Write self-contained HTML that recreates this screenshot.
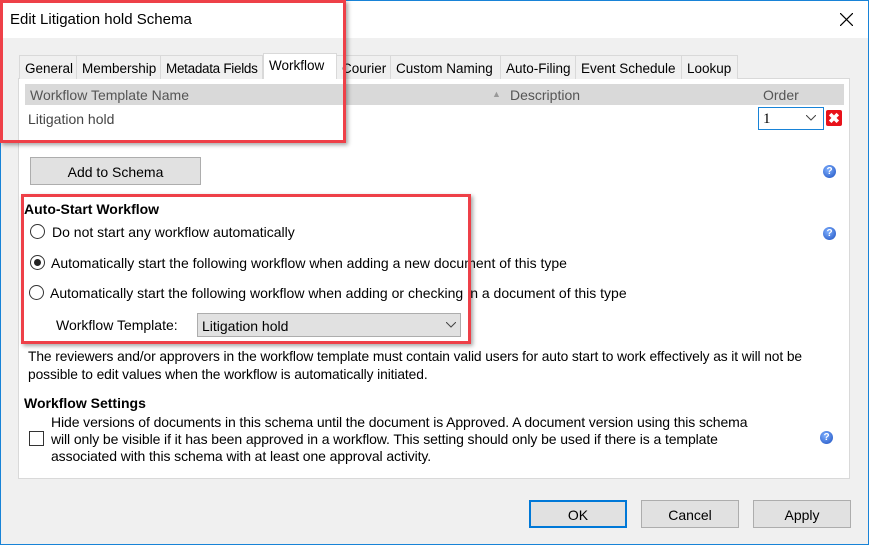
<!DOCTYPE html>
<html><head><style>
*{box-sizing:border-box;margin:0;padding:0}
body{width:869px;height:545px;overflow:hidden;background:#f0f0f0;font-family:"Liberation Sans",sans-serif;font-size:14px;color:#000;position:relative}
.a{position:absolute;white-space:nowrap}
.win{position:absolute;left:0;top:0;width:869px;height:545px;border:1px solid #1883d7;border-top:none}
.title{position:absolute;left:0;top:0;width:869px;height:38px;background:#fff;border-top:1px solid #1883d7}
.tab{position:absolute;top:55px;height:24px;border:1px solid #d9d9d9;border-bottom:none;background:#f0f0f0;padding:5px 0 0 5px;font-size:13.5px;white-space:nowrap;overflow:hidden}
.panel{position:absolute;left:18px;top:78px;width:832px;height:401px;background:#fff;border:1px solid #d9d9d9}
.btn{position:absolute;background:#e1e1e1;border:1px solid #adadad;text-align:center;font-size:14px}
.radio{position:absolute;width:15px;height:15px;border:1px solid #333;border-radius:50%;background:#fff}
.help{position:absolute;width:13px;height:13px;border-radius:50%;background:radial-gradient(circle at 40% 35%,#7fb0ff,#1c4fbf);color:#fff;font-size:10px;font-weight:bold;text-align:center;line-height:13px}
.red{position:absolute;border:3px solid #ee4048;box-shadow:2px 2px 4px rgba(0,0,0,.35)}
</style></head><body>
<div class="title"></div>
<div class="a" style="left:10px;top:11px;font-size:15px">Edit Litigation hold Schema</div>
<svg class="a" style="left:840px;top:13px" width="13" height="13"><path d="M0 0L13 13M13 0L0 13" stroke="#000" stroke-width="1.2"/></svg>
<div class="win"></div>

<div class="panel"></div>
<div class="tab" style="left:19px;width:58px">General</div>
<div class="tab" style="left:76px;width:85px">Membership</div>
<div class="tab" style="left:160px;width:103px;letter-spacing:-0.3px">Metadata Fields</div>
<div class="tab" style="left:263px;top:53px;height:26px;width:74px;background:#fff;padding-top:4px;z-index:2">Workflow</div>
<div class="tab" style="left:336px;width:55px">Courier</div>
<div class="tab" style="left:390px;width:111px">Custom Naming</div>
<div class="tab" style="left:500px;width:76px">Auto-Filing</div>
<div class="tab" style="left:575px;width:107px">Event Schedule</div>
<div class="tab" style="left:681px;width:57px">Lookup</div>

<div class="a" style="left:25px;top:84px;width:819px;height:21px;background:#d9d9d9"></div>
<div class="a" style="left:30px;top:87px;color:#555">Workflow Template Name</div>
<div class="a" style="left:492px;top:89px;color:#999;font-size:9px">▲</div>
<div class="a" style="left:510px;top:87px;color:#555">Description</div>
<div class="a" style="left:763px;top:87px;color:#555">Order</div>
<div class="a" style="left:28px;top:111px;color:#444">Litigation hold</div>
<div class="a" style="left:758px;top:107px;width:66px;height:23px;border:1px solid #1883d7;background:#fff;padding:3px 0 0 4px;font-family:'Liberation Serif',serif;font-size:15px">1</div>
<svg class="a" style="left:806px;top:115px" width="10" height="6"><path d="M0 0L5 5L10 0" stroke="#444" fill="none"/></svg>
<div class="a" style="left:826px;top:110px;width:16px;height:16px;background:#e8121a;border-radius:2px;color:#fff;font-weight:bold;font-size:14px;text-align:center;line-height:16px">✖</div>

<div class="btn" style="left:30px;top:157px;width:171px;height:28px;padding-top:6px">Add to Schema</div>
<div class="help" style="left:823px;top:165px">?</div>

<div class="a" style="left:24px;top:201px;font-weight:bold;font-size:14px">Auto-Start Workflow</div>
<div class="radio" style="left:30px;top:224px"></div>
<div class="a" style="left:52px;top:224px">Do not start any workflow automatically</div>
<div class="help" style="left:823px;top:227px">?</div>
<div class="radio" style="left:30px;top:255px"><div style="position:absolute;left:3px;top:3px;width:7px;height:7px;border-radius:50%;background:#222"></div></div>
<div class="a" style="left:51px;top:255px">Automatically start the following workflow when adding a new document of this type</div>
<div class="radio" style="left:29px;top:285px"></div>
<div class="a" style="left:50px;top:285px">Automatically start the following workflow when adding or checking in a document of this type</div>
<div class="a" style="left:56px;top:317px">Workflow Template:</div>
<div class="a" style="left:197px;top:313px;width:264px;height:24px;background:#e1e1e1;border:1px solid #adadad;padding:4px 0 0 4px">Litigation hold</div>
<svg class="a" style="left:446px;top:322px" width="10" height="6"><path d="M0 0L5 5L10 0" stroke="#444" fill="none"/></svg>

<div class="a" style="left:28px;top:348px;line-height:18px;font-size:13.8px;letter-spacing:-0.1px">The reviewers and/or approvers in the workflow template must contain valid users for auto start to work effectively as it will not be<br>possible to edit values when the workflow is automatically initiated.</div>
<div class="a" style="left:24px;top:395px;font-weight:bold;font-size:14px">Workflow Settings</div>
<div class="a" style="left:29px;top:431px;width:15px;height:15px;border:1px solid #333;background:#fff"></div>
<div class="a" style="left:51px;top:414px;line-height:17px;font-size:14px;letter-spacing:-0.1px">Hide versions of documents in this schema until the document is Approved. A document version using this schema<br>will only be visible if it has been approved in a workflow. This setting should only be used if there is a template<br>associated with this schema with at least one approval activity.</div>
<div class="help" style="left:820px;top:431px">?</div>

<div class="btn" style="left:529px;top:500px;width:98px;height:28px;padding-top:5px;border:2px solid #0078d7">OK</div>
<div class="btn" style="left:641px;top:500px;width:98px;height:28px;padding-top:6px">Cancel</div>
<div class="btn" style="left:753px;top:500px;width:98px;height:28px;padding-top:6px">Apply</div>

<div class="red" style="left:0px;top:0px;width:346px;height:143px"></div>
<div class="red" style="left:21px;top:194px;width:450px;height:150px"></div>
</body></html>
